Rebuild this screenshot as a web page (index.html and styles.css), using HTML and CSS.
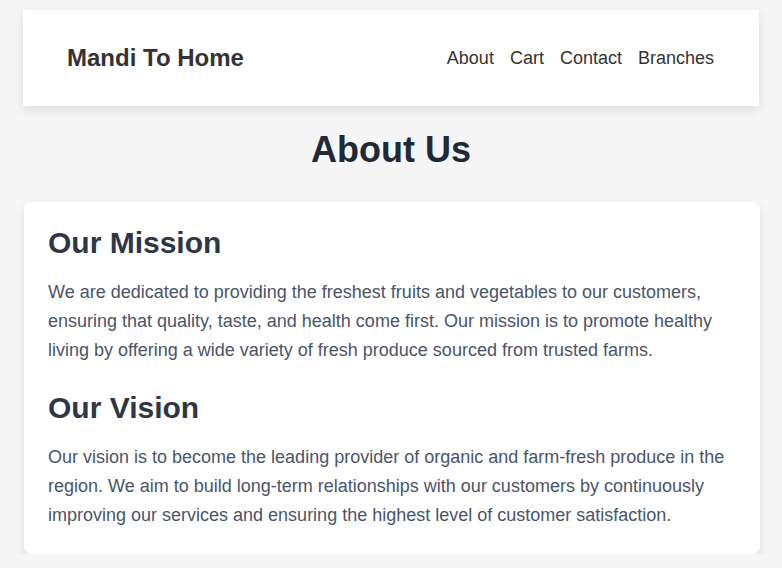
FILE: index.html
```html
<!DOCTYPE html>
<html lang="en">
<head>
<meta charset="utf-8">
<title>About Us - Mandi To Home</title>
<link rel="stylesheet" href="styles.css">
</head>
<body>
<header class="site-header">
  <div class="logo">Mandi To Home</div>
  <nav class="nav">
    <a href="#">About</a>
    <a href="#">Cart</a>
    <a href="#">Contact</a>
    <a href="#">Branches</a>
  </nav>
</header>
<h1 class="page-title">About Us</h1>
<section class="about-card">
  <h2>Our Mission</h2>
  <p>We are dedicated to providing the freshest fruits and vegetables to our customers, ensuring that quality, taste, and health come first. Our mission is to promote healthy living by offering a wide variety of fresh produce sourced from trusted farms.</p>
  <h2>Our Vision</h2>
  <p>Our vision is to become the leading provider of organic and farm-fresh produce in the region. We aim to build long-term relationships with our customers by continuously improving our services and ensuring the highest level of customer satisfaction.</p>
</section>
</body>
</html>
```
FILE: styles.css
```css
html, body {
  margin: 0;
  padding: 0;
}
body {
  background: #f5f5f5;
  font-family: "Liberation Sans", Arial, sans-serif;
  color: #333;
}
.site-header {
  margin: 10px 23px 0;
  height: 96px;
  box-sizing: border-box;
  padding: 0 45px 0 44px;
  background: #fff;
  display: flex;
  align-items: center;
  justify-content: space-between;
  box-shadow: 0 4px 10px rgba(0, 0, 0, 0.1);
}
.logo {
  font-size: 24px;
  font-weight: bold;
  color: #333;
}
.nav {
  display: flex;
  gap: 16px;
}
.nav a {
  font-size: 18px;
  color: #333;
  text-decoration: none;
}
.page-title {
  margin: 23px 0 31px;
  text-align: center;
  font-size: 36px;
  font-weight: bold;
  color: #1f2937;
}
.about-card {
  margin: 0 22px 0 24px;
  background: #fff;
  border-radius: 8px;
  padding: 24px 24px 24px;
  box-shadow: 0 4px 10px rgba(0, 0, 0, 0.1);
}
.about-card h2 {
  margin: 0 0 18px;
  font-size: 30px;
  font-weight: bold;
  color: #2d3748;
}
.about-card p {
  margin: 0 0 27px;
  font-size: 18px;
  line-height: 1.6;
  color: #4a5568;
}
.about-card p:last-child {
  margin-bottom: 0;
}
```
